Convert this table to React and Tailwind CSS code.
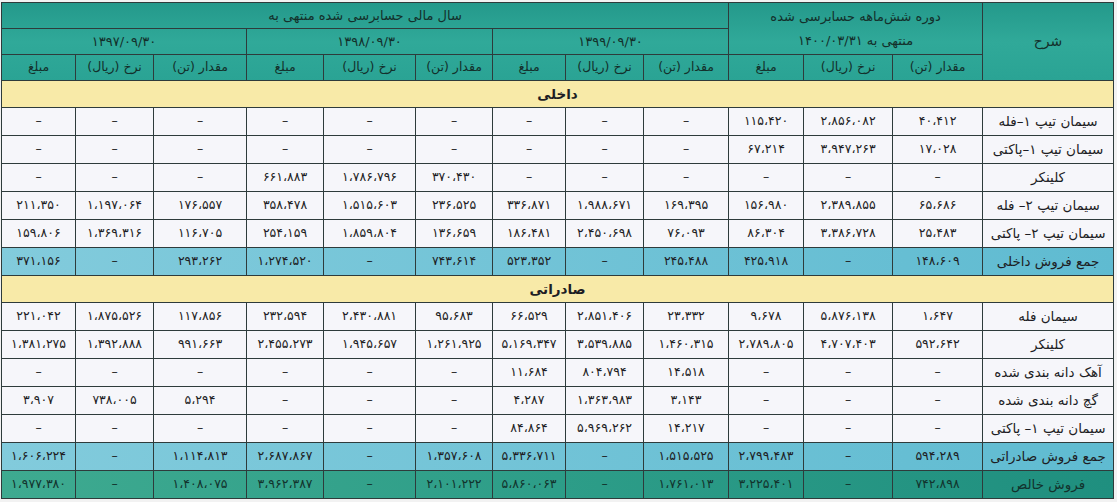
import React from 'react'

const FA = '۰۱۲۳۴۵۶۷۸۹'
const fa = (s) => s.replace(/[0-9]/g, d => FA[d]).replace(/,/g, '،')

const COLS = [131, 90, 89, 75, 85, 78, 73, 77, 92, 77, 93, 78, 74]
const D = ['–', '–', '–']

const domestic = [
  ['سیمان تیپ ۱–فله', '40,412', '2,856,082', '115,420', ...D, ...D, ...D],
  ['سیمان تیپ ۱–پاکتی', '17,028', '3,947,263', '67,214', ...D, ...D, ...D],
  ['کلینکر', ...D, ...D, '370,430', '1,786,796', '661,883', ...D],
  ['سیمان تیپ ۲– فله', '65,686', '2,389,855', '156,980', '169,395', '1,988,671', '336,871', '236,525', '1,515,603', '358,478', '176,557', '1,197,064', '211,350'],
  ['سیمان تیپ ۲– پاکتی', '25,483', '3,386,728', '86,304', '76,093', '2,450,698', '186,481', '136,659', '1,859,804', '254,159', '116,705', '1,369,316', '159,806'],
]
const domesticTotal = ['جمع فروش داخلی', '148,609', '–', '425,918', '245,488', '–', '523,352', '743,614', '–', '1,274,520', '293,262', '–', '371,156']

const exports_ = [
  ['سیمان فله', '1,647', '5,876,138', '9,678', '23,332', '2,851,406', '66,529', '95,683', '2,430,881', '232,594', '117,856', '1,875,526', '221,042'],
  ['کلینکر', '592,642', '4,707,403', '2,789,805', '1,460,315', '3,539,885', '5,169,347', '1,261,925', '1,945,657', '2,455,273', '991,663', '1,392,888', '1,381,275'],
  ['آهک دانه بندی شده', ...D, '14,518', '804,794', '11,684', ...D, ...D],
  ['گچ دانه بندی شده', ...D, '3,143', '1,363,983', '4,287', ...D, '5,294', '738,005', '3,907'],
  ['سیمان تیپ ۱– پاکتی', ...D, '14,217', '5,969,262', '84,864', ...D, ...D],
]
const exportTotal = ['جمع فروش صادراتی', '594,289', '–', '2,799,483', '1,515,525', '–', '5,336,711', '1,357,608', '–', '2,687,867', '1,114,813', '–', '1,606,224']
const netSales = ['فروش خالص', '742,898', '–', '3,225,401', '1,761,013', '–', '5,860,063', '2,101,222', '–', '3,962,387', '1,408,075', '–', '1,977,380']

const cell = 'border border-[#2e3b3b] text-center align-middle px-1 whitespace-nowrap'

function Row({ data, kind }) {
  const rowBg =
    kind === 'total'
      ? 'bg-linear-to-l from-[#5fbbd1] to-[#82cbdc]'
      : kind === 'net'
        ? 'bg-linear-to-l from-[#1f8f7f] via-[#2d9d88] to-[#3eaa90]'
        : 'bg-[#f6f6fa]'
  return (
    <tr className={`h-[28px] ${rowBg}`}>
      {data.map((v, i) => (
        <td key={i} className={`${cell} ${i === 0 ? 'text-[13.5px]' : 'text-[12.5px]'} ${kind === 'net' ? 'text-[#12332d]' : 'text-[#1d1d24]'}`}>
          {fa(v)}
        </td>
      ))}
    </tr>
  )
}

function Band({ label }) {
  return (
    <tr className="h-[27px] bg-[#f8eaa8]">
      <td colSpan={13} className="border border-[#2e3b3b] text-center text-[13.5px] font-bold text-[#1d1d24]">
        {label}
      </td>
    </tr>
  )
}

const sub = ['مقدار (تن)', 'نرخ (ریال)', 'مبلغ']

export default function App() {
  return (
    <div className="w-[1117px] h-[502px] overflow-hidden bg-[#f2f2f2] pt-[2px] pl-[1px]" style={{ fontFamily: "'DejaVu Sans', sans-serif" }}>
      <table dir="rtl" className="table-fixed border-collapse w-[1112px]">
        <colgroup>
          {COLS.map((w, i) => <col key={i} style={{ width: w }} />)}
        </colgroup>
        <thead className="bg-linear-to-b from-[#24998b] via-[#30a999] to-[#2aa394] text-[#13302b] text-[13px]">
          <tr className="h-[26px]">
            <th rowSpan={3} className={`${cell} font-normal text-[14px]`}>شرح</th>
            <th colSpan={3} rowSpan={2} className={`${cell} font-normal leading-[24px]`}>
              <div>دوره شش‌ماهه حسابرسی شده</div>
              <div>منتهی به {fa('1400/03/31')}</div>
            </th>
            <th colSpan={9} className={`${cell} font-normal`}>سال مالی حسابرسی شده منتهی به</th>
          </tr>
          <tr className="h-[26px]">
            <th colSpan={3} className={`${cell} font-normal`}>{fa('1399/09/30')}</th>
            <th colSpan={3} className={`${cell} font-normal`}>{fa('1398/09/30')}</th>
            <th colSpan={3} className={`${cell} font-normal`}>{fa('1397/09/30')}</th>
          </tr>
          <tr className="h-[26px]">
            {[0, 1, 2, 3].flatMap(g =>
              sub.map((s, j) => (
                <th key={`${g}-${j}`} className={`${cell} font-normal text-[12.5px]`}>{s}</th>
              ))
            )}
          </tr>
        </thead>
        <tbody>
          <Band label="داخلی" />
          {domestic.map((r, i) => <Row key={i} data={r} />)}
          <Row data={domesticTotal} kind="total" />
          <Band label="صادراتی" />
          {exports_.map((r, i) => <Row key={i} data={r} />)}
          <Row data={exportTotal} kind="total" />
          <Row data={netSales} kind="net" />
        </tbody>
      </table>
    </div>
  )
}
